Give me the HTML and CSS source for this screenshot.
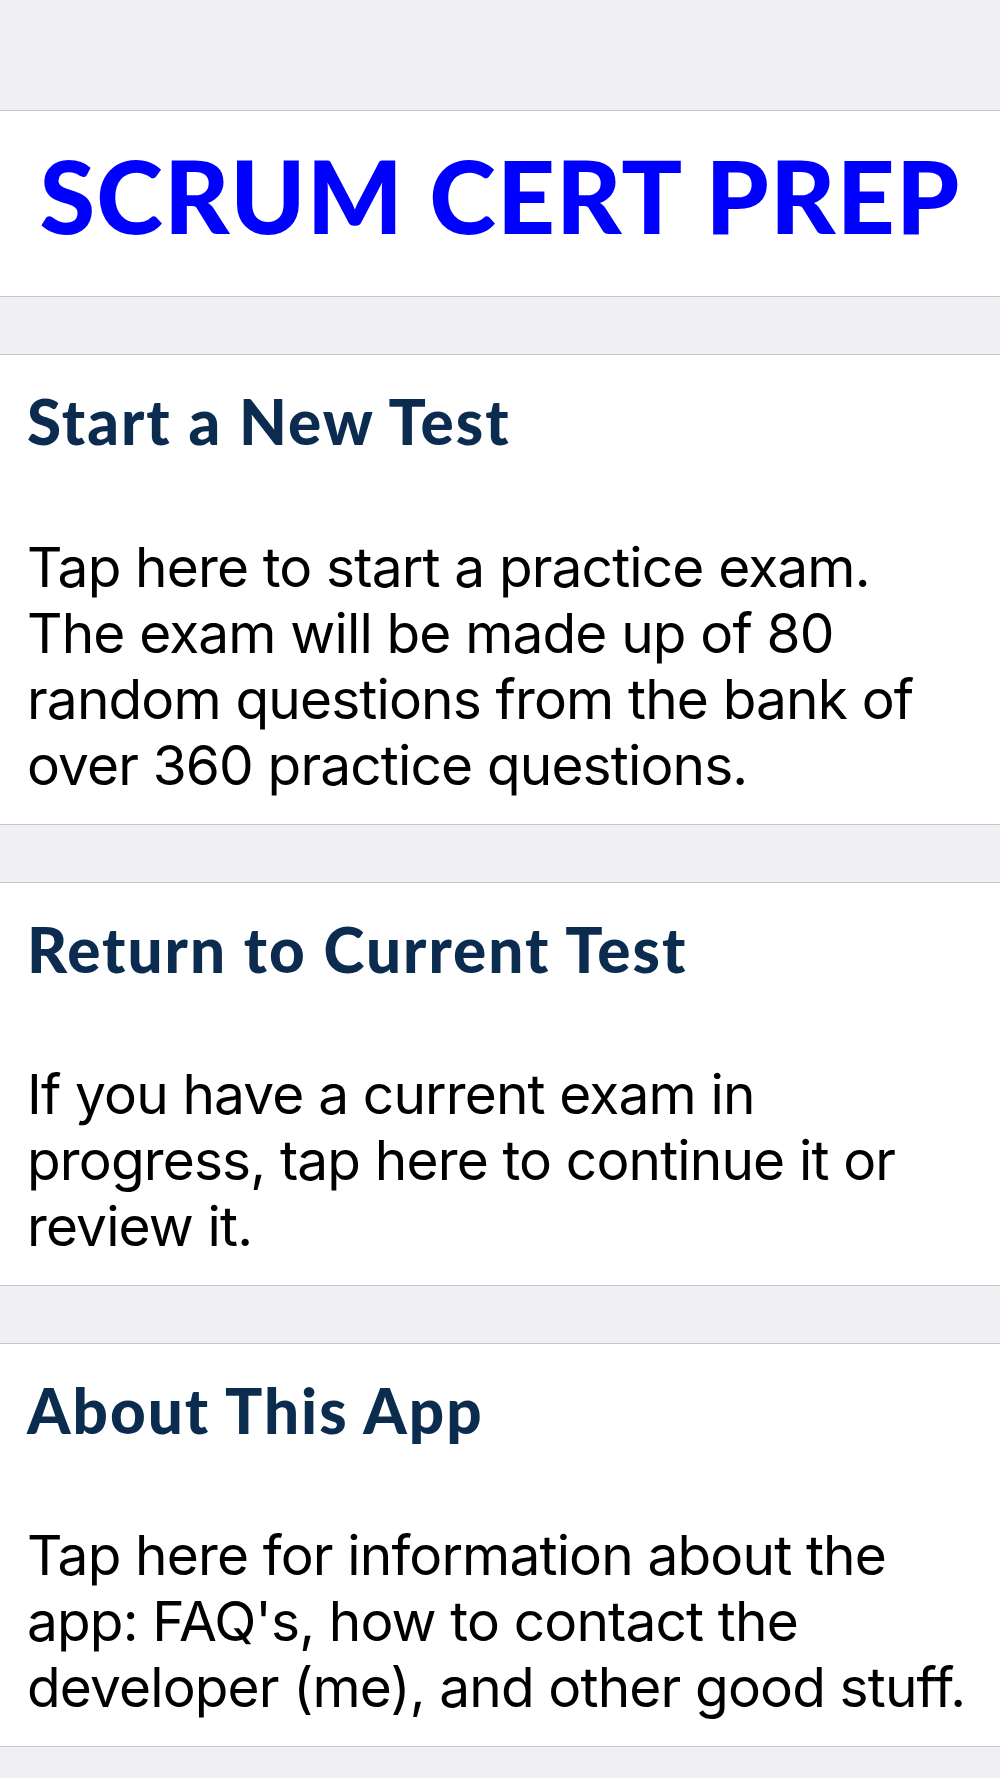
FILE: index.html
```html
<!DOCTYPE html>
<html lang="en">
<head>
    <meta charset="UTF-8">
    <meta name="viewport" content="width=device-width, initial-scale=1.0">
    <title>Scrum Cert Prep</title>
    <link rel="stylesheet" href="styles.css">
</head>
<body>
    <div class="topo"></div>
    <header class="cabecalho">
        <h1>SCRUM CERT PREP</h1>
    </header>
    <main>
        <div class="espaco"></div>
        <div class="opcao">
            <h2>Start a New Test</h2>
            <p>Tap here to start a practice exam. The exam will be made up of 80 random questions from the bank of over 360 practice questions.</p>
        </div>

        <div class="espaco"></div>
        <div class="opcao">
            <h2>Return to Current Test</h2>
            <p>If you have a current exam in progress, tap here to continue it or review it.</p>
        </div>

        <div class="espaco"></div>
        <div class="opcao">
            <h2>About This App</h2>
            <p>Tap here for information about the app: FAQ's, how to contact the developer (me), and other good stuff.</p>
        </div>
        <div class="espaco"></div>
    </main>
</body>
</html>
```

FILE: styles.css
```css
* {
    padding: 0;
    margin: 0;
    box-sizing: border-box;
}

body {
    background-color: #efeff4;
    font-family: Inter, 'Noto Sans', sans-serif;
}

.topo {
    height: 110px;
}

.cabecalho {
    background-color: #ffffff;
    border-top: 1px solid #c8c7cc;
    border-bottom: 1px solid #c8c7cc;
    padding: 24px 0 40px;
    display: flex;
    justify-content: center;
}

.cabecalho h1 {
    font-family: Lato, sans-serif;
    font-weight: 900;
    font-size: 101px;
    line-height: 1.2;
    letter-spacing: 1.2px;
    color: #0000ff;
}

.espaco {
    height: 57px;
}

.opcao {
    background-color: #ffffff;
    border-top: 1px solid #c8c7cc;
    border-bottom: 1px solid #c8c7cc;
    padding: 29px 27px 26px;
}

.opcao h2 {
    font-family: Lato, sans-serif;
    font-weight: 900;
    font-size: 62px;
    line-height: 1.2;
    letter-spacing: 2px;
    color: #0b2b4f;
    margin-bottom: 75px;
}

.opcao p {
    font-size: 55px;
    line-height: 66px;
    letter-spacing: -0.85px;
    color: #000000;
}
```
